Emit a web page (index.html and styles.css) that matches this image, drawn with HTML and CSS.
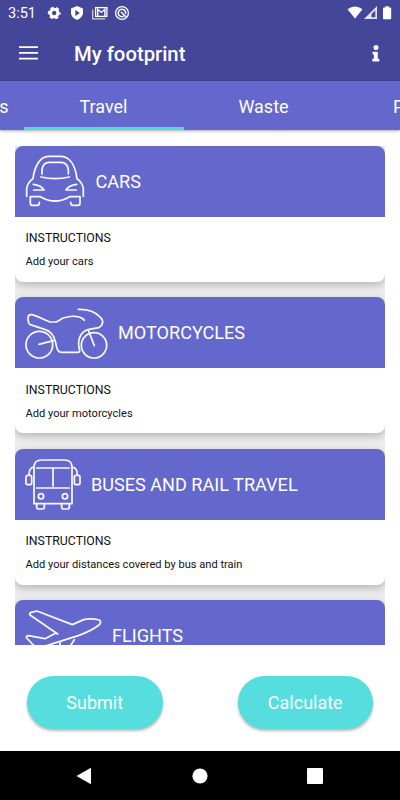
FILE: index.html
```html
<!DOCTYPE html>
<html lang="en">
<head>
<meta charset="utf-8">
<title>My footprint</title>
<link rel="stylesheet" href="styles.css">
</head>
<body>
<header class="top">
  <div class="status">
    <span class="clock">3:51</span>
    <svg class="notices" width="84" height="16" viewBox="0 0 84 16">
      <g fill="none" stroke="#fff">
        <circle cx="7.2" cy="8" r="3.7" stroke-width="3"/>
        <circle cx="7.2" cy="8" r="5.4" stroke-width="2" stroke-dasharray="3.2 2.455" stroke-dashoffset="1.6"/>
        <path d="M45.7 4.500v9.300h12.500" stroke-width="1.200" opacity=".75"/>
        <rect x="48.600" y="2.600" width="11.300" height="8.800" stroke-width="1.300"/>
        <path d="M50.700 11V4.200l3.600 3.200 3.600-3.200V11" stroke-width="1.400"/>
        <circle cx="75" cy="8" r="6.400" stroke-width="1.300"/>
        <path d="M76.800 11.200a3.700 3.700 0 1 1 1.700-2.200M74 7l5.200 5" stroke-width="1.500"/>
      </g>
      <path fill="#fff" fill-rule="evenodd" d="M30 1.100l6 2.300v4.400c0 3.200-2.500 5.800-6 7.200-3.500-1.400-6-4-6-7.200V3.400zM28.300 4.900v6l4.600-3z"/>
    </svg>
    <svg class="signals" width="48" height="16" viewBox="0 0 48 16" fill="#fff">
      <path d="M.5 4.300Q8 -1.500 15.500 4.300L8 13.500z"/>
      <path fill-rule="evenodd" d="M17 14L30 1v13zM24.500 12.300h3.800V5.300l-3.800 3.800z" opacity=".85"/>
      <path d="M38.300 1.200h3.600v1.200h1.400q.9 0 .9.900v10q0 .9-.9.900h-6.400q-.9 0-.9-.9v-10q0-.9.900-.9h1.400z"/>
    </svg>
  </div>
  <div class="appbar">
    <svg width="20" height="14" viewBox="0 0 20 14" stroke="#fff" stroke-width="1.800"><path d="M0 1.200h19M0 6.900h19M0 12.600h19"/></svg>
    <h1>My footprint</h1>
    <svg class="info" width="8" height="17" viewBox="0 0 8 17" fill="#fff"><circle cx="4" cy="2.500" r="2.500"/><path d="M.6 6.700h5.200v7.100h1.500v2.800H.4v-2.800h1.500V9.500H.6z"/></svg>
  </div>
</header>
<nav class="tabs">
  <div class="tab previous">s</div>
  <div class="tab active">Travel</div>
  <div class="tab">Waste</div>
  <div class="tab next">P</div>
</nav>
<main class="list">
  <section class="card">
    <div class="card-head">
      <svg class="art" width="60" height="52" viewBox="45 45 180 156">
        <path d="M50 169V145Q53 127 69 116C73 85 86 50 116 49H153C184 50 197 85 201 116Q217 127 220 145V169"/>
        <path d="M96 102C94 78 103 67 118 67H152C168 67 177 78 175 102M93 111Q135 121 178 111M70 133Q94 136 102 150H71M200 133Q176 136 168 150H199M61 170V190Q61 196 67 196H82Q88 196 88 187M61 170H91Q135 196 179 170H210V190Q210 196 204 196H188Q182 196 182 187"/>
      </svg>
      <h2>CARS</h2>
    </div>
    <div class="card-body"><h3>INSTRUCTIONS</h3><p>Add your cars</p></div>
  </section>
  <section class="card">
    <div class="card-head">
      <svg class="art" width="82.500" height="54" viewBox="45 45 247.500 162">
        <circle cx="88" cy="161" r="40"/><circle cx="252" cy="163" r="38"/>
        <path d="M87 160L130 149M236 120L253 164"/>
        <path d="M223 88C211 72 180 74 160 81C148 86 143 93 137 93H120C100 86 80 74 66 71Q54 69 54 82Q54 98 61 101L104 115C126 121 133 136 137 155C141 174 143 184 155 184H204Q209 184 209 178C201 150 209 123 234 116L266 110C283 99 280 86 270 78Q249 54 205 55"/>
      </svg>
      <h2>MOTORCYCLES</h2>
    </div>
    <div class="card-body"><h3>INSTRUCTIONS</h3><p>Add your motorcycles</p></div>
  </section>
  <section class="card">
    <div class="card-head">
      <svg class="art" width="55.500" height="53" viewBox="45 53 166.500 159">
        <path d="M72 190V81Q72 59 95 59H163Q186 59 186 81V190ZM80 83H178M80 143H178M129 83V137M72 80Q57 82 57 103M186 80Q202 82 202 103"/>
        <rect x="48" y="105" width="17" height="28" rx="5"/><rect x="193" y="105" width="17" height="28" rx="5"/>
        <circle cx="93" cy="168" r="8"/><circle cx="165" cy="168" r="8"/>
        <path d="M80 190V200Q80 206 86 206H97Q103 206 103 200V190M155 190V200Q155 206 161 206H172Q178 206 178 200V190"/>
      </svg>
      <h2>BUSES AND RAIL TRAVEL</h2>
    </div>
    <div class="card-body"><h3>INSTRUCTIONS</h3><p>Add your distances covered by bus and train</p></div>
  </section>
  <section class="card">
    <div class="card-head">
      <svg class="art" width="76.500" height="53" viewBox="45 86 229.500 159">
        <path d="M143 161L61 105Q56 99 64 96L81 92L187 133L221 118Q242 113 268 119Q276 124 267 134Q245 151 205 166L119 193Q82 205 70 194L50 173Q47 167 56 166L105 175L138 158M193 178L157 234L139 239L151 188"/>
      </svg>
      <h2>FLIGHTS</h2>
    </div>
  </section>
</main>
<div class="actions"><button>Submit</button><button>Calculate</button></div>
<footer class="navbar">
  <svg width="16" height="18" viewBox="0 0 16 18"><path d="M.5 9L15 .8v16.400z"/></svg>
  <svg width="16" height="16" viewBox="0 0 16 16"><circle cx="8" cy="8" r="7.600"/></svg>
  <svg width="16" height="16" viewBox="0 0 16 16"><rect width="16" height="16" rx="1"/></svg>
</footer>
</body>
</html>
```
FILE: styles.css
```css
* { box-sizing: border-box; }
body {
  margin: 0;
  width: 400px;
  height: 800px;
  overflow: hidden;
  display: flex;
  flex-direction: column;
  background: #fff;
  font-family: Roboto, sans-serif;
}
h1, h2, h3, p { margin: 0; font-weight: 400; }
svg { display: block; flex: none; }

.top { height: 81px; flex: none; background: #44469a; color: #fff; }
.status { height: 25px; display: flex; align-items: center; padding: 0 5px 0 8px; }
.clock { width: 39px; font-size: 14.5px; line-height: 25px; padding-top: 1px; }
.signals { margin-left: auto; }
.appbar { height: 56px; display: flex; align-items: center; padding: 0 20px 0 19px; }
.appbar h1 { margin-left: 35px; padding-top: 2px; font-size: 20.3px; font-weight: 500; line-height: 24px; }
.info { margin-left: auto; }

.tabs {
  height: 49px;
  flex: none;
  display: flex;
  overflow: hidden;
  background: #6468cc;
  color: #fff;
  box-shadow: 0 1px 3px rgba(0, 0, 0, .35);
}
.tab {
  flex: 0 0 160px;
  border-bottom: 3px solid transparent;
  text-align: center;
  white-space: nowrap;
  font-size: 18px;
  line-height: 51px;
}
.previous { flex-basis: 24px; min-width: 0; padding-right: 15.500px; display: flex; justify-content: flex-end; }
.active { padding-right: 1px; border-color: #4adbdf; }
.active + .tab { padding-right: 1px; }
.tab.next { padding-left: 49px; text-align: left; }

.list {
  height: 499px;
  flex: none;
  margin: 15.500px 15px 0;
  overflow: hidden;
  background: #eee;
  display: flex;
  flex-direction: column;
  gap: 15.500px;
}
.card {
  height: 136px;
  flex: none;
  border-radius: 8px;
  background: #fff;
  box-shadow: 0 3px 9px rgba(0, 0, 0, .25);
}
.card-head {
  height: 71px;
  display: flex;
  align-items: center;
  gap: 10.500px;
  padding-left: 10px;
  border-radius: 8px 8px 0 0;
  background: #6468cc;
  color: #fff;
}
.card-head h2 { font-size: 18.100px; line-height: 24px; padding-top: 1px; white-space: nowrap; }
.art {
  fill: none;
  stroke: #f8f8ff;
  stroke-width: 5.200;
  stroke-linecap: round;
  stroke-linejoin: round;
  overflow: visible;
}
.card-body { padding: 13.500px 10.500px; color: #111; }
.card-body h3 { font-size: 12.300px; line-height: 16px; }
.card-body p { margin-top: 8px; font-size: 11.080px; line-height: 16px; }

.actions { height: 106px; flex: none; display: flex; justify-content: space-between; padding: 31px 27px 0; }
.actions button {
  width: 135.500px;
  height: 53px;
  padding: 1px 0 0;
  border: 0;
  border-radius: 27px;
  background: #56dedf;
  color: #fff;
  font: 18px Roboto, sans-serif;
  box-shadow: 0 2px 3px rgba(0, 0, 0, .28);
}
.navbar {
  flex: 1;
  display: flex;
  align-items: center;
  justify-content: space-between;
  padding: 1px 77px 0 76px;
  background: #000;
  fill: #fff;
}
```
